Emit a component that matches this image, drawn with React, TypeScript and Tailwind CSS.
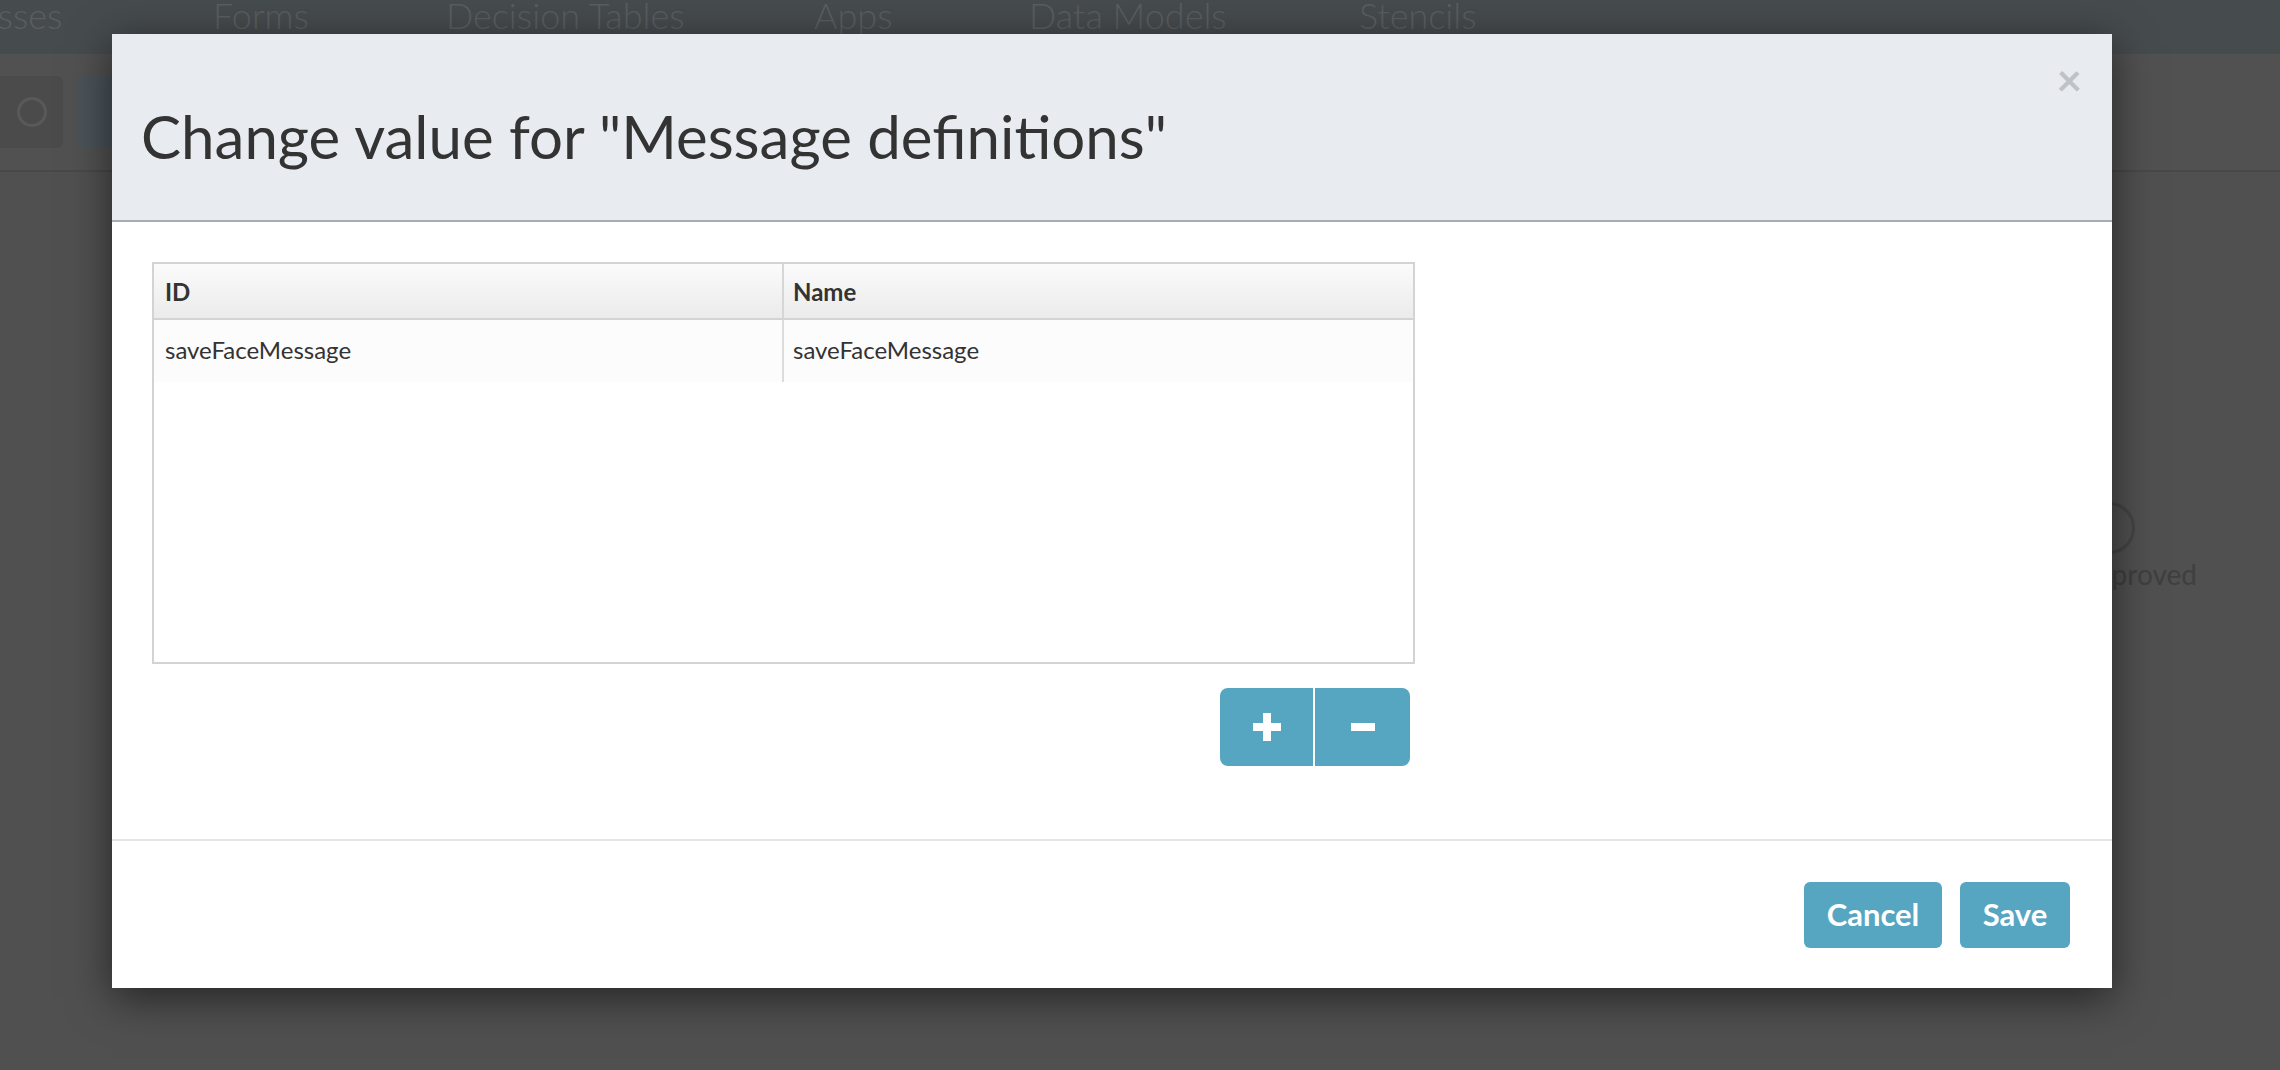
import React from 'react';

const font = { fontFamily: 'Lato, "Open Sans", sans-serif' };

const NavItem: React.FC<{ label: string; className: string }> = ({ label, className }) => (
  <span className={`absolute top-[-12px] text-[36px] font-light text-[#5a5e61] ${className}`}>{label}</span>
);

const App: React.FC = () => {
  return (
    <div className="relative w-[2280px] h-[1070px] overflow-hidden bg-[#505050]" style={font}>
      {/* page behind the overlay */}
      <div className="relative h-[54px] bg-[#464b4e]">
        <NavItem label="Processes" className="left-[-90px]" />
        <NavItem label="Forms" className="left-[213px]" />
        <NavItem label="Decision Tables" className="left-[446px]" />
        <NavItem label="Apps" className="left-[814px]" />
        <NavItem label="Data Models" className="left-[1029px]" />
        <NavItem label="Stencils" className="left-[1359px]" />
      </div>
      <div className="h-[118px] border-b-2 border-[#484848] bg-[#515151] flex items-center gap-[14px]">
        <div className="w-[63px] h-[72px] bg-[#4b4b4b] rounded-r-md flex items-center justify-center">
          <div className="w-[30px] h-[30px] rounded-full border-[3px] border-[#595959]" />
        </div>
        <div className="w-[80px] h-[72px] bg-[#4a5359] rounded-md" />
      </div>
      <div className="absolute left-[2083px] top-[502px] w-[52px] h-[52px] rounded-full border-[3px] border-[#444]" />
      <span className="absolute left-[2082px] top-[553px] text-[28px] text-[#3f3f3f]">approved</span>

      {/* modal */}
      <div className="absolute left-[112px] top-[34px] w-[2000px] bg-white shadow-[0_10px_40px_rgba(0,0,0,0.55)]">
        <div className="h-[188px] bg-[#e8ebf0] border-b-2 border-[#a5acb6] flex items-start justify-between pl-[29px] pr-[30px]">
          <h2 className="mt-[66px] text-[60px] leading-[72px] font-normal text-[#333]">Change value for "Message definitions"</h2>
          <button className="mt-[21px] text-[44px] leading-[48px] font-bold text-[#bfc2c6]">×</button>
        </div>

        <div className="h-[617px] pt-[40px] pl-[40px]">
          <div className="w-[1263px] h-[402px] border-2 border-[#d3d3d3]">
            <div className="flex h-[56px] border-b-2 border-[#d3d3d3] bg-gradient-to-b from-[#fbfbfb] to-[#ebebeb] text-[24px] font-bold text-[#333]">
              <div className="w-[630px] border-r-2 border-[#d6d6d6] pl-[11px] pt-[10px]">ID</div>
              <div className="flex-1 pl-[9px] pt-[10px]">Name</div>
            </div>
            <div className="flex h-[62px] bg-[#fcfcfc] text-[24px] text-[#333]">
              <div className="w-[630px] border-r-2 border-[#dcdcdc] pl-[11px] pt-[12px]">saveFaceMessage</div>
              <div className="flex-1 pl-[9px] pt-[12px]">saveFaceMessage</div>
            </div>
          </div>
          <div className="w-[1258px] mt-[24px] flex justify-end">
            <div className="flex h-[78px] rounded-[8px] overflow-hidden">
              <button className="w-[95px] bg-[#56a6c2] flex items-center justify-center border-r-2 border-white">
                <svg width="28" height="28" viewBox="0 0 28 28">
                  <rect x="10" y="0" width="8" height="28" fill="#fff" />
                  <rect x="0" y="10" width="28" height="8" fill="#fff" />
                </svg>
              </button>
              <button className="w-[95px] bg-[#56a6c2] flex items-center justify-center">
                <svg width="24" height="8" viewBox="0 0 24 8">
                  <rect x="0" y="0" width="24" height="8" fill="#fff" />
                </svg>
              </button>
            </div>
          </div>
        </div>

        <div className="h-[149px] border-t-2 border-[#e5e5e5] flex items-center justify-end gap-[18px] pr-[42px]">
          <button className="w-[138px] h-[66px] rounded-[6px] bg-[#56a6c2] text-white text-[31px] font-bold">Cancel</button>
          <button className="w-[110px] h-[66px] rounded-[6px] bg-[#56a6c2] text-white text-[31px] font-bold">Save</button>
        </div>
      </div>
    </div>
  );
};

export default App;
